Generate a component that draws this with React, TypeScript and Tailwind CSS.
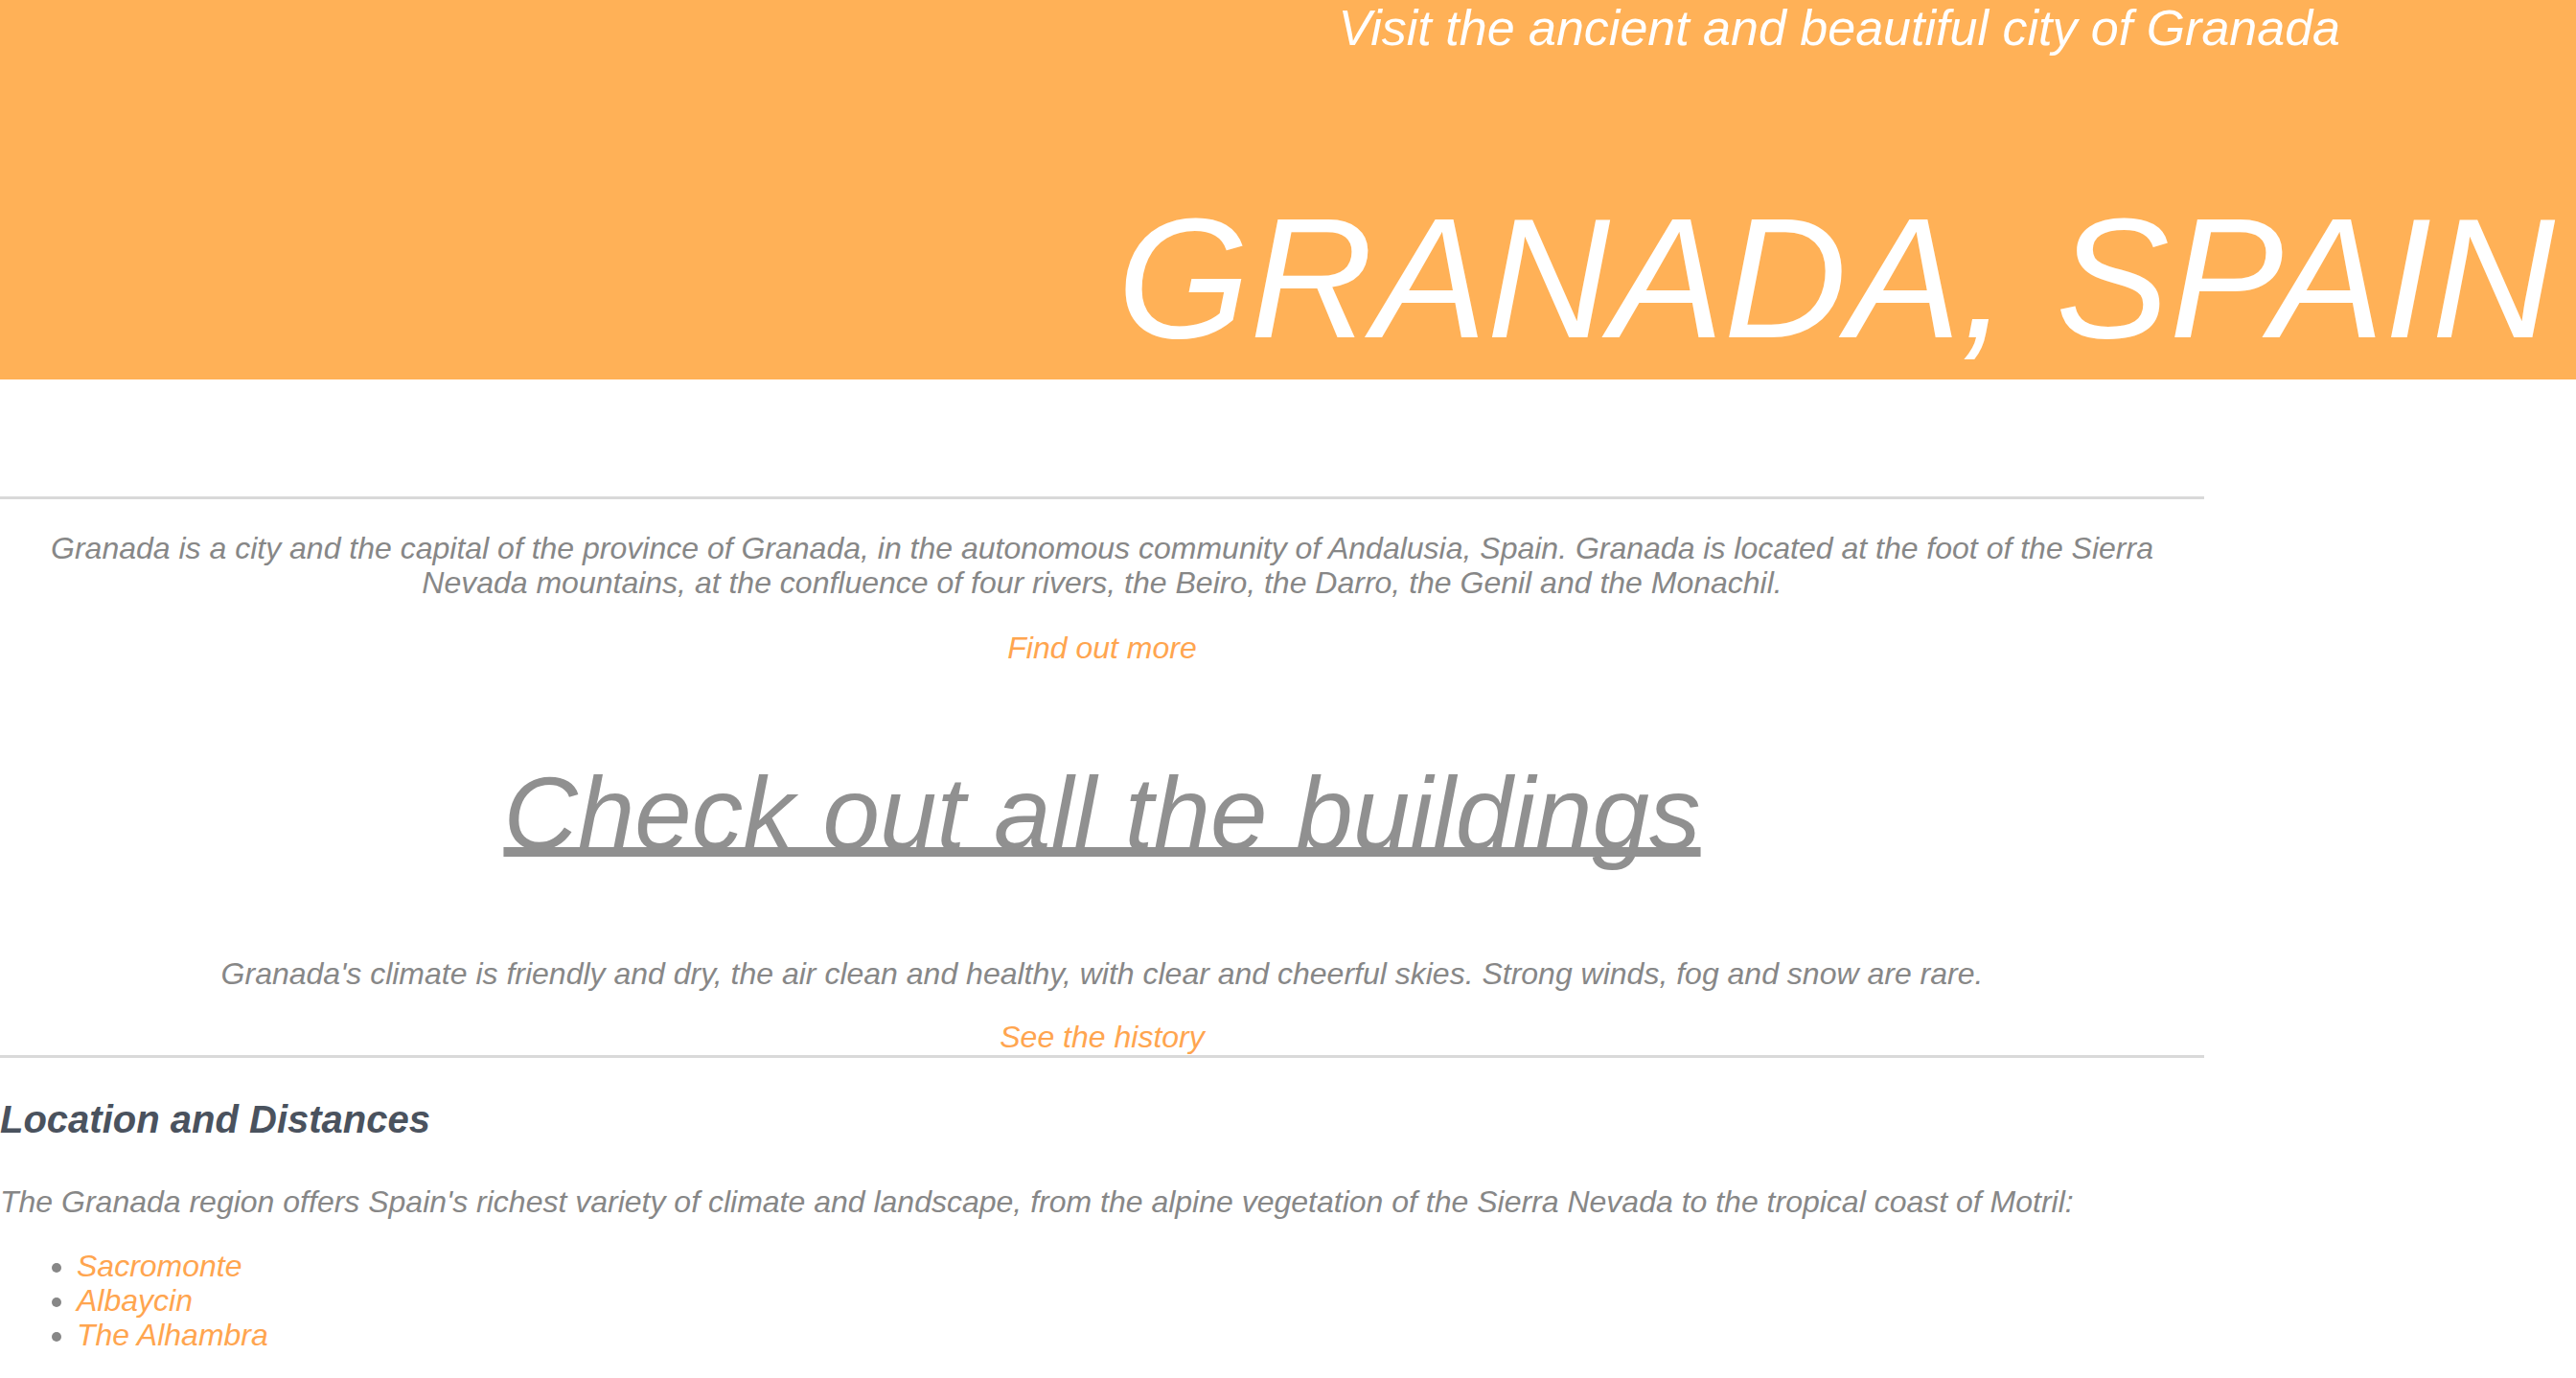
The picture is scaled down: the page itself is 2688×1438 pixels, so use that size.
const links = ['Sacromonte', 'Albaycin', 'The Alhambra']

export default function App() {
  return (
    <div className="min-h-screen bg-white italic font-['Liberation_Sans',Arial,sans-serif]">
      <header className="h-[396px] bg-[#ffb157] flex flex-col items-end text-white">
        <h3 className="mt-[3px] pr-[246px] text-[52px] leading-none font-normal">
          Visit the ancient and beautiful city of Granada
        </h3>
        <h1 className="mt-[147px] pr-[22px] text-[178px] leading-none font-normal">GRANADA, SPAIN</h1>
      </header>

      <main className="w-[2300px] text-[32px] leading-[36px] text-[#878787]">
        <hr className="mt-[122px] border-0 border-t-[3px] border-[#d9d9d9]" />

        <section className="text-center">
          <p className="mt-[33px]">
            Granada is a city and the capital of the province of Granada, in the autonomous community of Andalusia,
            Spain. Granada is located at the foot of the Sierra Nevada mountains, at the confluence of four rivers, the
            Beiro, the Darro, the Genil and the Monachil.
          </p>
          <p className="mt-[32px]">
            <a href="#" className="text-[#ffa54f]">Find out more</a>
          </p>

          <h2 className="mt-[102px] text-[107px] leading-none font-normal text-[#909090]">
            <a href="#" className="underline decoration-[10px] underline-offset-[-2px] [text-decoration-skip-ink:none]">
              Check out all the buildings
            </a>
          </h2>

          <p className="mt-[95px]">
            Granada's climate is friendly and dry, the air clean and healthy, with clear and cheerful skies. Strong winds,
            fog and snow are rare.
          </p>
          <p className="mt-[30px]">
            <a href="#" className="text-[#ffa54f]">See the history</a>
          </p>
        </section>

        <hr className="mt-[1px] border-0 border-t-[3px] border-[#d9d9d9]" />

        <section>
          <h4 className="mt-[44px] text-[40px] leading-none font-bold text-[#4a525e]">Location and Distances</h4>
          <p className="mt-[48px]">
            The Granada region offers Spain's richest variety of climate and landscape, from the alpine vegetation of the
            Sierra Nevada to the tropical coast of Motril:
          </p>
          <ul className="mt-[31px] pl-[80px] list-disc marker:text-[#878787]">
            {links.map((l) => (
              <li key={l}>
                <a href="#" className="text-[#ffa54f]">{l}</a>
              </li>
            ))}
          </ul>
        </section>
      </main>
    </div>
  )
}
